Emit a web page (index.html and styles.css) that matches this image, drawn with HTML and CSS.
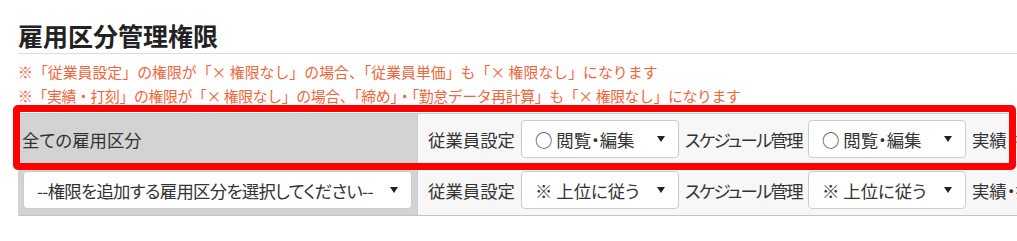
FILE: index.html
```html
<!DOCTYPE html>
<html lang="ja">
<head>
<meta charset="utf-8">
<title>雇用区分管理権限</title>
<link rel="stylesheet" href="styles.css">
</head>
<body>
<div class="page">
  <h2 class="title">雇用区分管理権限</h2>
  <div class="notes">
    <p class="note">※「従業員設定」の権限が「× 権限なし」の場合、「従業員単価」も「× 権限なし」になります</p>
    <p class="note note-tight">※「実績・打刻」の権限が「× 権限なし」の場合、「締め」・「勤怠データ再計算」も「× 権限なし」になります</p>
  </div>
  <div class="perm-table">
    <div class="highlight"></div>
    <div class="perm-row">
      <div class="row-head"><span class="head-label">全ての雇用区分</span></div>
      <div class="row-body">
        <span class="field-label">従業員設定</span>
        <div class="select"><span class="select-text">○ 閲覧・編集</span><span class="caret"></span></div>
        <span class="field-label field-label-tight">スケジュール管理</span>
        <div class="select"><span class="select-text">○ 閲覧・編集</span><span class="caret"></span></div>
        <span class="field-label">実績・打刻</span>
        <div class="select"><span class="select-text">○ 閲覧・編集</span><span class="caret"></span></div>
      </div>
    </div>
    <div class="perm-row">
      <div class="row-head"><div class="select select-wide"><span class="select-text select-text-tight">--権限を追加する雇用区分を選択してください--</span><span class="caret"></span></div></div>
      <div class="row-body">
        <span class="field-label">従業員設定</span>
        <div class="select"><span class="select-text">※ 上位に従う</span><span class="caret"></span></div>
        <span class="field-label field-label-tight">スケジュール管理</span>
        <div class="select"><span class="select-text">※ 上位に従う</span><span class="caret"></span></div>
        <span class="field-label">実績・打刻</span>
        <div class="select"><span class="select-text">※ 上位に従う</span><span class="caret"></span></div>
      </div>
    </div>
  </div>
</div>
</body>
</html>
```

FILE: styles.css
```css
html, body {
  margin: 0;
  padding: 0;
  background: #ffffff;
  overflow: hidden;
}

body {
  font-family: "Noto Sans CJK JP", "Noto Sans", sans-serif;
  color: #333333;
}

.page {
  padding-left: 18px;
  width: 1400px;
}

.title {
  margin: 0;
  padding-top: 19px;
  padding-bottom: 2px;
  line-height: 32px;
  font-size: 25px;
  font-weight: 700;
  color: #222222;
  border-bottom: 1px solid #dddddd;
  width: 999px;
}

.notes {
  margin-top: 6px;
}

.note {
  margin: 0;
  font-size: 14.9px;
  line-height: 24px;
  color: #f2653a;
  white-space: nowrap;
}

.note-tight {
  letter-spacing: -0.4px;
}

.perm-table {
  position: relative;
  margin-top: 5px;
  border-top: 1px solid #cccccc;
  width: 1300px;
  font-feature-settings: "palt";
}

.highlight {
  position: absolute;
  left: -5px;
  top: -9px;
  width: 1003px;
  height: 65px;
  box-sizing: border-box;
  border: 7px solid #ff0000;
  border-radius: 5px;
  z-index: 2;
}

.perm-row {
  display: flex;
  border-bottom: 1px solid #c4c4c4;
}

.row-head {
  flex: 0 0 399px;
  box-sizing: border-box;
  background: #d3d3d3;
  padding: 6px 5px;
  display: flex;
  align-items: center;
}

.head-label {
  font-size: 17.4px;
  margin-left: -1px;
  color: #333333;
}

.row-body {
  flex: 1 1 auto;
  display: flex;
  align-items: center;
  gap: 6px;
  padding: 6px 10px;
  background: #f7f7f7;
  border-left: 1px solid #cccccc;
  white-space: nowrap;
}

.field-label {
  font-size: 17.4px;
  color: #333333;
}

.field-label-tight {
  letter-spacing: -1.7px;
}

.select {
  position: relative;
  box-sizing: border-box;
  width: 158px;
  height: 38px;
  flex: 0 0 auto;
  background: #ffffff;
  border: 1px solid #cccccc;
  border-radius: 4px;
  display: flex;
  align-items: center;
  padding-left: 13px;
  font-size: 17.4px;
  color: #333333;
}

.select-wide {
  width: 389px;
}

.select-text {
  white-space: nowrap;
}

.select-text-tight {
  letter-spacing: -0.7px;
}

.caret {
  position: absolute;
  right: 13px;
  top: 50%;
  margin-top: -3px;
  width: 0;
  height: 0;
  border-left: 4.5px solid transparent;
  border-right: 4.5px solid transparent;
  border-top: 6px solid #222222;
}
```
